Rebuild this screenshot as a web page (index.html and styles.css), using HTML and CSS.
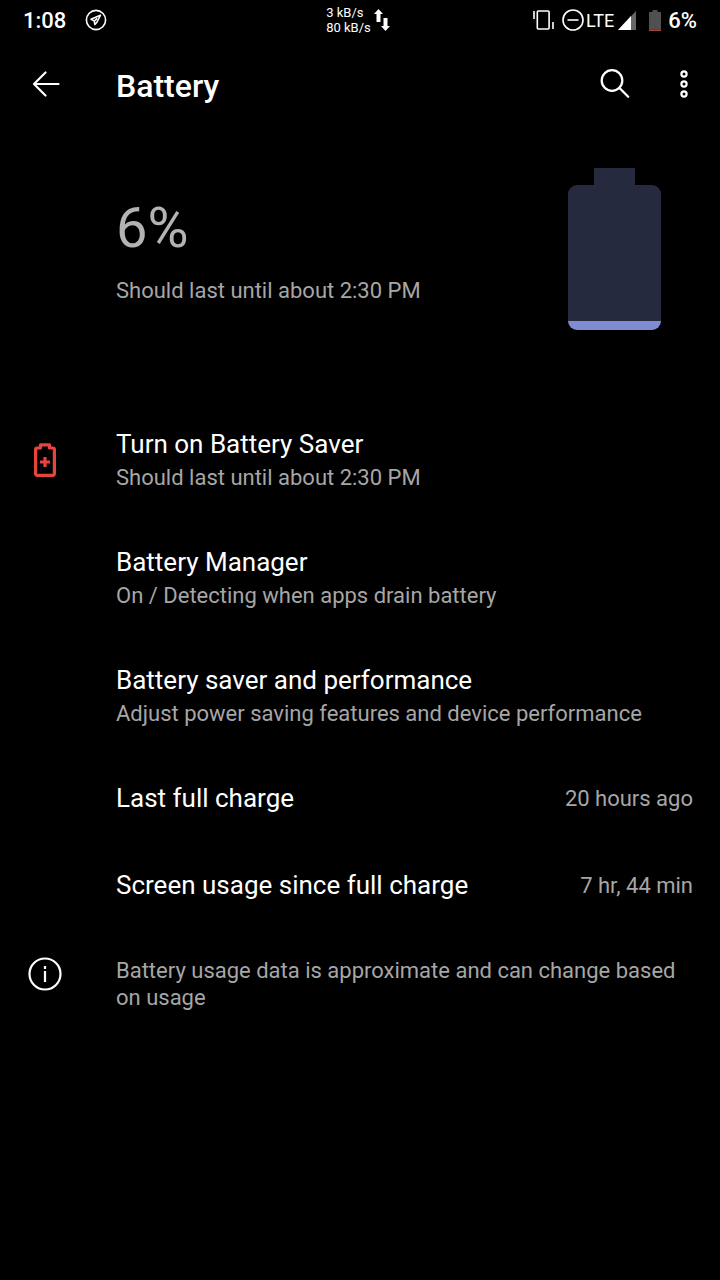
FILE: index.html
```html
<!DOCTYPE html>
<html lang="en">
<head>
<meta charset="utf-8">
<meta name="viewport" content="width=device-width, initial-scale=1">
<title>Battery</title>
<link rel="stylesheet" href="styles.css">
</head>
<body>
<div class="status">
  <div class="status-start">
    <time class="clock">1:08</time>
    <svg width="22" height="22" viewBox="0 0 22 22" fill="none" stroke="#fff" stroke-width="1.6" stroke-linejoin="round" aria-hidden="true"><circle cx="11" cy="11" r="9.6"/><path d="M15.4 6.3 6 10.3l3.2 1.6.7 3.6 2-2.3Z"/><path d="m9.4 12 2.8-2.6"/></svg>
  </div>
  <div class="network">
    <div class="speed"><span>3 kB/s</span><span>80 kB/s</span></div>
    <svg width="16" height="22" viewBox="0 0 16 22" fill="#fff" aria-hidden="true"><path d="M4.500 0 9 5H6.500v8h-4V5H0ZM11.500 22 7 17h2.500V9h4v8H16Z"/></svg>
  </div>
  <div class="status-end">
    <svg class="vibrate" width="21" height="20" viewBox="0 0 21 20" fill="none" stroke="#fff" stroke-width="1.6" aria-hidden="true"><rect x="4.300" y="1" width="11.800" height="18" rx="1"/><path d="M1 1v8M20 12v7"/></svg>
    <svg width="22" height="22" viewBox="0 0 22 22" fill="none" stroke="#fff" stroke-width="1.6" aria-hidden="true"><circle cx="11" cy="11" r="10"/><path d="M5.500 11h11"/></svg>
    <span class="lte">LTE</span>
    <svg class="signal" width="18" height="19" viewBox="0 0 18 19" aria-hidden="true"><path fill="#666" d="M18 0v19H0Z"/><path fill="#fff" d="M13 5v14H0Z"/></svg>
    <svg class="mini-battery" width="12" height="21" viewBox="0 0 12 21" aria-hidden="true"><path fill="#505050" d="M3.500 0h5v2H12v17.500H0V2h3.500Z"/><path fill="#ab453f" d="M0 19.500h12V21H0Z"/></svg>
    <span class="charge">6%</span>
  </div>
</div>
<header class="toolbar">
  <button class="icon-button back" type="button" aria-label="Back">
    <svg width="28" height="26" viewBox="0 0 28 26" fill="none" stroke="#fff" stroke-width="2.200" stroke-linecap="round" stroke-linejoin="round"><path d="M13.500 1.500 2 13l11.500 11.500M2 13h24.500"/></svg>
  </button>
  <h1>Battery</h1>
  <button class="icon-button search" type="button" aria-label="Search">
    <svg width="30" height="30" viewBox="0 0 30 30" fill="none" stroke="#fff" stroke-width="2.300" stroke-linecap="round"><circle cx="12" cy="11.500" r="10.300"/><path d="m19.500 19 8.700 8.700"/></svg>
  </button>
  <button class="icon-button" type="button" aria-label="More options">
    <svg width="8" height="28" viewBox="0 0 8 28" fill="none" stroke="#fff" stroke-width="2.200"><circle cx="4" cy="4" r="2.600"/><circle cx="4" cy="14" r="2.600"/><circle cx="4" cy="24" r="2.600"/></svg>
  </button>
</header>
<main>
  <section class="summary">
    <div class="summary-text">
      <p class="level">6%</p>
      <p class="sub">Should last until about 2:30 PM</p>
    </div>
    <svg class="battery" width="93" height="162" viewBox="0 0 93 162" aria-hidden="true"><path fill="#262a3e" d="M26 0h41v17h17a9 9 0 0 1 9 9v127H0V26a9 9 0 0 1 9-9h17Z"/><path fill="#7f8cd2" d="M0 153h93a9 9 0 0 1-9 9H9a9 9 0 0 1-9-9Z"/></svg>
  </section>
  <button class="row" type="button">
    <span class="row-icon"><svg width="22" height="34" viewBox="0 0 22 34" fill="none" stroke="#e5443f" stroke-width="3.200" stroke-linejoin="round" aria-hidden="true"><path d="M6.500 5V1.800h9V5h3.300q1.600 0 1.600 1.600v24q0 1.800-1.800 1.800H3.400q-1.800 0-1.800-1.800v-24Q1.600 5 3.200 5Z"/><path d="M11 14v10M6 19h10"/></svg></span>
    <span class="row-text"><span class="title">Turn on Battery Saver</span><span class="sub">Should last until about 2:30 PM</span></span>
  </button>
  <button class="row" type="button">
    <span class="row-text"><span class="title">Battery Manager</span><span class="sub">On / Detecting when apps drain battery</span></span>
  </button>
  <button class="row" type="button">
    <span class="row-text"><span class="title">Battery saver and performance</span><span class="sub">Adjust power saving features and device performance</span></span>
  </button>
  <div class="row">
    <span class="row-text"><span class="title">Last full charge</span></span>
    <span class="sub">20 hours ago</span>
  </div>
  <div class="row">
    <span class="row-text"><span class="title">Screen usage since full charge</span></span>
    <span class="sub">7 hr, 44 min</span>
  </div>
  <div class="row note">
    <span class="row-icon"><svg width="34" height="34" viewBox="0 0 34 34" fill="none" stroke="#fff" stroke-width="2.200" aria-hidden="true"><circle cx="17" cy="17" r="15.500"/><path d="M17 14v11M17 9v3"/></svg></span>
    <p class="row-text sub">Battery usage data is approximate and can change based on usage</p>
  </div>
</main>
</body>
</html>
```
FILE: styles.css
```css
* {
  box-sizing: border-box;
}

body {
  margin: 0;
  min-height: 100vh;
  background: #000;
  color: #fff;
  font-family: Roboto, sans-serif;
}

h1,
p {
  margin: 0;
}

svg {
  display: block;
  flex: none;
}

button {
  border: 0;
  background: none;
  color: inherit;
  font: inherit;
  text-align: left;
}

.status {
  display: grid;
  grid-template-columns: 1fr auto 1fr;
  align-items: center;
  height: 40px;
  padding: 0 23px;
  font-size: 22px;
  font-weight: 500;
}

.status-start {
  display: flex;
  align-items: center;
  gap: 19px;
}

.network {
  display: flex;
  align-items: center;
  gap: 3px;
  margin-right: 4px;
  font-size: 13px;
  font-weight: 400;
  line-height: 15px;
}

.speed {
  display: flex;
  flex-direction: column;
}

.status-end {
  display: flex;
  align-items: center;
  justify-content: flex-end;
}

.vibrate {
  margin-right: 8px;
}

.lte {
  margin: 0 4px 0 2px;
  font-size: 18px;
  font-weight: 400;
}

.mini-battery {
  margin: 0 7px 0 13px;
}

.toolbar {
  display: flex;
  align-items: center;
  height: 88px;
  padding: 0 32px;
}

h1 {
  flex: 1;
  padding-top: 3px;
  font-size: 32px;
  font-weight: 500;
  line-height: 40px;
}

.icon-button {
  padding: 0;
}

.back {
  width: 84px;
}

.search {
  margin-right: 50px;
}

.summary {
  display: flex;
  align-items: center;
  justify-content: space-between;
  padding: 40px 59px 71px 116px;
}

.summary-text {
  display: flex;
  flex-direction: column;
  gap: 16px;
}

.level {
  color: #b3b3b3;
  font-size: 56px;
  line-height: 66px;
}

.sub {
  color: #a6a6a6;
  font-size: 22px;
  line-height: 27px;
}

.row {
  display: flex;
  align-items: center;
  width: 100%;
  padding: 28px 27px 28px 116px;
}

.row-icon {
  display: flex;
  justify-content: center;
  width: 34px;
  margin-left: -88px;
  margin-right: 54px;
}

.row-text {
  display: flex;
  flex: 1;
  flex-direction: column;
  gap: 4px;
}

.title {
  font-size: 26px;
  line-height: 31px;
}

.note {
  align-items: flex-start;
}
```
